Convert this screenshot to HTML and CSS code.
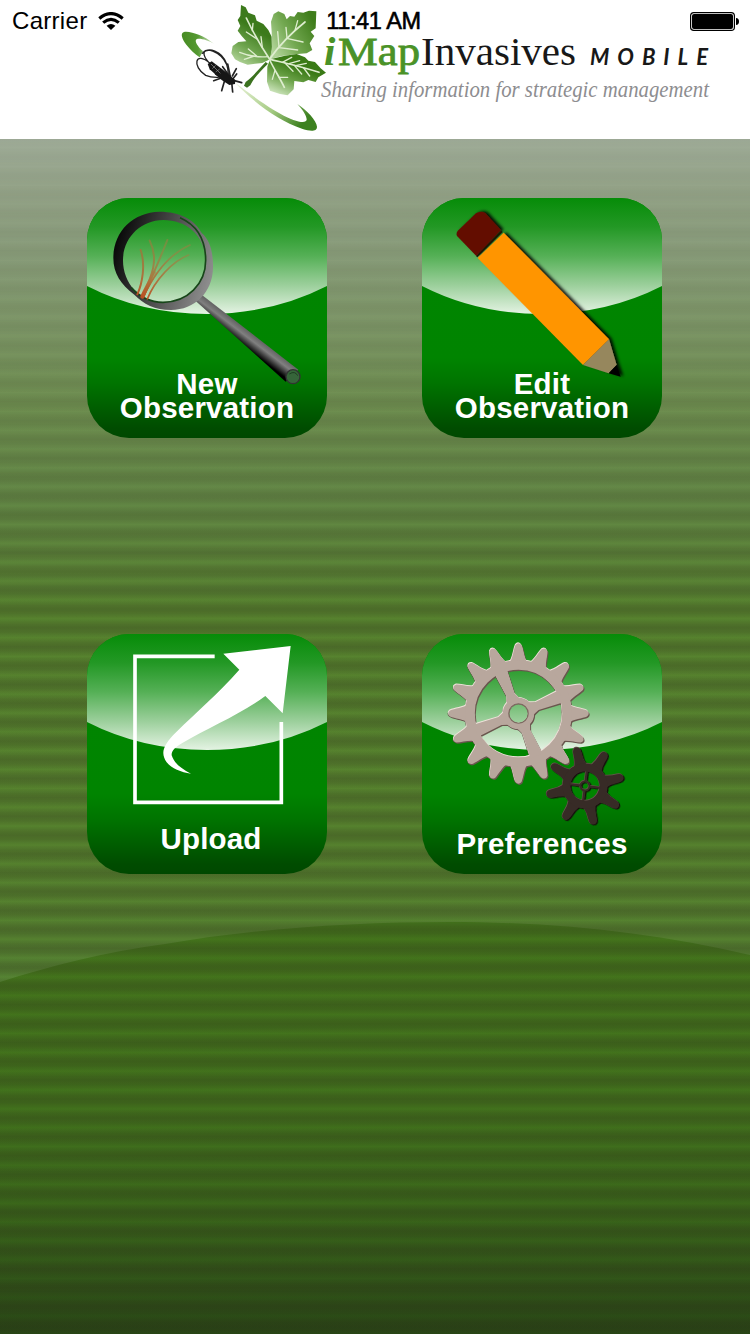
FILE: index.html
```html
<!DOCTYPE html>
<html lang="en">
<head>
<meta charset="utf-8">
<title>iMapInvasives Mobile</title>
<link rel="stylesheet" href="styles.css">
</head>
<body>
<div class="screen">
  <header class="header">
    <svg class="logo" viewBox="0 0 750 139" aria-label="iMapInvasives Mobile">
      <defs>
        <linearGradient id="leafA" x1=".6" y1="0" x2="0.2" y2="1"><stop offset="0.35" stop-color="#3c7a1b"/><stop offset=".7" stop-color="#6fa54f"/><stop offset="1" stop-color="#b4d59c"/></linearGradient>
        <linearGradient id="leafB" x1="1" y1="0.1" x2="0" y2="0.7"><stop offset="0.1" stop-color="#3f7d1b"/><stop offset=".6" stop-color="#73a851"/><stop offset="1" stop-color="#b0d398"/></linearGradient>
        <linearGradient id="leafC" x1=".8" y1="0" x2="0.2" y2="1"><stop offset="0.35" stop-color="#3a7a16"/><stop offset=".65" stop-color="#6ca349"/><stop offset="1" stop-color="#cfe6bf"/></linearGradient>
        <linearGradient id="swoosh" x1="0" y1="0" x2="1" y2="0.5"><stop offset="0" stop-color="#edf5dd"/><stop offset="0.6" stop-color="#a5cb83"/><stop offset="1" stop-color="#3d8120"/></linearGradient>
        <linearGradient id="swooshTop" x1="0" y1="0" x2="1" y2="0"><stop offset="0" stop-color="#478b22"/><stop offset="0.5" stop-color="#559932"/><stop offset="1" stop-color="#dcebcf"/></linearGradient>
      </defs>
      <g transform="translate(175 0) scale(.33333)">
        <path fill="url(#swooshTop)" d="M117 131C88 108 46 92 27 96C14 100 22 118 34 134C45 149 60 162 74 172L84 154C70 142 55 122 66 117C78 114 100 122 117 131Z"/>
        <path fill="url(#swoosh)" d="M178 246C240 293 300 338 355 360C377 368 396 369 395 358C394 345 383 330 367 312C395 330 425 362 426 380C426 396 405 394 383 387C305 360 235 306 178 246Z"/>
        <path fill="url(#leafA)" d="M285 178L262 189L240 191L218 194L195 186L180 178L169 160L173 138L190 126L214 124L200 108L188 92L196 78L188 60L196 48L198 15L212 22L220 38L240 46L245 62L265 72L280 90L290 110L291 150Z"/>
        <path fill="url(#leafB)" d="M285 178L291 140L290 95L288 65L296 42L310 34L328 42L335 58L345 48L358 50L368 36L385 38L402 32L424 34L422 85L407 95L418 108L404 130L412 150L395 160L360 163L320 168Z"/>
        <path fill="url(#leafC)" d="M285 178L330 167L365 162L390 172L400 182L420 186L437 205L453 218L430 232L422 246L400 240L385 247L358 243L356 268L338 286L315 282L285 272L276 245L277 200Z"/>
        <g fill="none" stroke="#deedcf" stroke-linecap="round">
          <path stroke-width="5" d="M283 176C262 145 232 92 214 54M284 177C312 137 350 98 390 66M286 178C335 190 385 201 432 217M284 180C300 212 315 235 328 262"/>
          <path stroke-width="4" d="M262 143L258 110M246 117L214 96M232 92L234 70M278 170C250 172 220 168 194 157M245 168L220 147M238 168L208 178M312 142L308 95M336 114L333 82M360 91L368 62M335 115L384 126M312 143L368 150M322 187L350 172M342 191L374 182M362 197L394 190M330 189L354 214M358 196L380 222M386 204L404 228M300 211L292 238M312 232L338 232"/>
        </g>
        <path fill="#3b721f" d="M272 186L279 191C255 214 235 236 226 256L216 263L207 257L212 246C232 232 252 206 272 186Z"/>
        <g fill="none" stroke="#222" stroke-width="4" stroke-linecap="round">
          <path d="M105 190C60 150 50 200 92 226Q108 233 130 232M100 186C66 145 105 140 138 169C154 184 160 202 160 224M82 160C100 140 140 152 154 190"/>
          <path stroke-width="5" d="M145 232L116 242M150 238L140 272M163 228L143 200M166 230L158 192M172 228L184 206M178 242L200 248M170 246L173 276M174 236L185 222M152 240L122 222"/>
        </g>
        <path fill="#161616" d="M98 192L110 184L142 208L162 224L181 240L180 252L163 255L140 240L104 208Z"/>
        <path fill="none" stroke="#999" stroke-width="2" d="M108 192L136 220M122 196L112 206M134 207L122 216"/>
      </g>
      <text class="brand"><tspan class="brand-i" x="324" y="65">i</tspan><tspan class="brand-map" x="338" y="65" textLength="82" lengthAdjust="spacingAndGlyphs">Map</tspan><tspan x="421" y="65" textLength="155" lengthAdjust="spacingAndGlyphs">Invasives</tspan></text>
      <text class="mobile" x="590" y="65" textLength="118">MOBILE</text>
      <text class="tagline" x="321" y="97" textLength="388" lengthAdjust="spacingAndGlyphs">Sharing information for strategic management</text>
    </svg>
    <div class="status">
      <div class="status-left">
        <span>Carrier</span>
        <svg class="wifi" viewBox="0 0 26 18"><g fill="none" stroke="#000" stroke-width="3.2"><path d="M1.3 6.4Q13 -3.2 24.7 6.4"/><path d="M5.2 10.6Q13 4 20.8 10.6"/></g><path d="M8.6 13.8Q13 10 17.4 13.8L13 18Z"/></svg>
      </div>
      <span class="clock">11:41 AM</span>
      <svg class="battery" viewBox="0 0 49 19"><rect x=".6" y=".6" width="43.8" height="17.8" rx="3.2" fill="#fff" stroke="#000" stroke-width="1.2"/><rect x="2" y="2" width="41" height="15" rx="2"/><path d="M46 6Q49 6.3 49 9.5Q49 12.7 46 13Z"/></svg>
    </div>
  </header>

  <main class="home">
    <svg class="hill" viewBox="0 0 750 412" preserveAspectRatio="none">
      <defs><linearGradient id="hillFill" x1="0" y1="0" x2="0" y2="1"><stop offset="0" stop-color="#44751c"/><stop offset=".45" stop-color="#42721d"/><stop offset=".68" stop-color="#3b681b"/><stop offset=".85" stop-color="#325719"/><stop offset="1" stop-color="#294716"/></linearGradient></defs>
      <path fill="url(#hillFill)" d="M0 60C50 44 105 30 165 22C250 7 350 0 450 0C560 0 655 11 750 33V412H0Z"/>
    </svg>

    <nav class="tiles">
      <a class="tile">
        <svg class="art" viewBox="0 0 240 240">
          <defs>
            <linearGradient id="gloss" x1="0" y1="0" x2="0" y2="1"><stop offset="0" stop-color="#068c08"/><stop offset=".25" stop-color="#239825"/><stop offset=".5" stop-color="#55b056"/><stop offset=".75" stop-color="#9bcf9b"/><stop offset="1" stop-color="#e4f3e3"/></linearGradient>
            <linearGradient id="rim" x1="0" y1=".3" x2="1" y2=".6"><stop offset="0" stop-color="#050505"/><stop offset=".5" stop-color="#4a4a4a"/><stop offset="1" stop-color="#8d8d8d"/></linearGradient>
            <linearGradient id="rod" gradientUnits="userSpaceOnUse" x1="478" y1="458" x2="504" y2="424"><stop offset="0" stop-color="#000"/><stop offset=".65" stop-color="#808080"/><stop offset="1" stop-color="#666"/></linearGradient>
            <linearGradient id="weed" x1="0" y1="1" x2=".6" y2="0"><stop offset="0" stop-color="#b95224"/><stop offset="1" stop-color="#a77b3f" stop-opacity=".5"/></linearGradient>
          </defs>
          <path id="shine" fill="url(#gloss)" d="M0 0H240V88Q185 116 120 116Q55 116 0 88Z"/>
          <g transform="scale(.33333) translate(-21 -24)">
            <path fill="url(#rod)" d="M343 329L366 315L655 539L617 575Z"/>
            <ellipse cx="639" cy="560" rx="21" ry="21" fill="#36653a" stroke="#333" stroke-width="4"/>
            <path fill="none" stroke="#1c3f20" stroke-width="3" d="M628 552Q645 541 653 557"/>
            <path fill="url(#rim)" fill-rule="evenodd" d="M239 65C300 65 345 90 365 129C391 151 400 190 399 235C397 307 345 360 273 360C225 360 190 342 163 314C122 282 100 250 100 203C101 125 157 67 239 65ZM250 90C180 91 129 145 129 211C129 280 180 337 249 337C323 337 378 280 377 209C374 140 323 90 250 90Z"/>
            <path fill="none" stroke="#174619" stroke-width="5" d="M300 83C350 105 377 150 377 211C377 282 322 337 249 337C208 337 177 319 154 293"/>
            <g fill="none" stroke="url(#weed)" stroke-linecap="round"><path stroke-width="6" d="M172 313C187 280 197 224 182 180M185 321C217 257 237 208 209 152M190 321C220 250 247 190 262 150"/><path stroke-width="5" d="M190 322C232 230 280 187 330 165M202 327C225 270 278 213 326 195"/><path stroke-width="12" d="M187 320Q200 290 224 250"/></g>
          </g>
        </svg>
        <span class="label">New<br>Observation</span>
      </a>

      <a class="tile">
        <svg class="art" viewBox="0 0 240 240">
          <defs><filter id="shade" x="-10%" y="-10%" width="125%" height="125%"><feDropShadow dx="8" dy="-2" stdDeviation="5" flood-color="#000" flood-opacity=".9"/></filter></defs>
          <use href="#shine"/>
          <g transform="scale(.33333) translate(-21 -24)">
            <g filter="url(#shade)">
              <path fill="#631000" d="M126 138Q122 129 130 121L183 70Q197 61 211 69L258 120L184 198Z"/>
              <path fill="#ff9500" d="M188 204L266 128L582 448L504 525Z"/>
              <path fill="#96875d" d="M504 525L582 448L605 525L581 550Z"/>
              <path fill="#000" d="M581 550L605 525L617 560Z"/>
            </g>
            <path stroke="#201500" stroke-width="5" d="M185 200L261 124"/>
          </g>
        </svg>
        <span class="label">Edit<br>Observation</span>
      </a>

      <a class="tile">
        <svg class="art" viewBox="0 0 240 240">
          <use href="#shine"/>
          <g transform="scale(.33333) translate(-21 -27)">
            <path fill="none" stroke="#fff" stroke-width="11" d="M404 94H165V532H604V291"/>
            <path fill="#fff" d="M632 63L430 86L478 134C415 206 350 260 289 321C250 359 240 384 260 412C275 431 303 442 333 446C302 430 282 414 275 391C274 377 285 367 307 354C386 307 480 269 556 213L608 265Z"/>
          </g>
        </svg>
        <span class="label label-upload">Upload</span>
      </a>

      <a class="tile">
        <svg class="art" viewBox="0 0 240 240">
          <defs>
            <filter id="soft" x="-10%" y="-10%" width="120%" height="120%"><feGaussianBlur stdDeviation=".6"/></filter>
            <path id="tooth" d="M-9.5 -50C-5.5 -55 -5 -64 -3 -68.5Q0 -72 3 -68.5C5 -64 5.5 -55 9.5 -50Z"/>
            <g id="teeth4"><use href="#tooth"/><use href="#tooth" transform="rotate(22.5)"/><use href="#tooth" transform="rotate(45)"/><use href="#tooth" transform="rotate(67.5)"/></g>
            <path id="spoke" d="M-7 -13L-4.2 -20L-6.5 -46H6.5L4.2 -20L7 -13Z"/>
            <g id="bigGear">
              <use href="#teeth4"/><use href="#teeth4" transform="rotate(90)"/><use href="#teeth4" transform="rotate(180)"/><use href="#teeth4" transform="rotate(270)"/>
              <circle r="48.5" fill="none" stroke="currentColor" stroke-width="9.5"/>
              <circle r="12.7" fill="none" stroke="currentColor" stroke-width="6"/>
              <use href="#spoke" transform="rotate(-23)"/><use href="#spoke" transform="rotate(68)"/><use href="#spoke" transform="rotate(157)"/><use href="#spoke" transform="rotate(248)"/>
            </g>
            <path id="peg" d="M-6.5 -20Q-4 -26 -4.2 -34Q-4 -39.5 0 -39.5Q4 -39.5 4.2 -34Q4 -26 6.5 -20Z"/>
            <g id="pegs2"><use href="#peg"/><use href="#peg" transform="rotate(45)"/></g>
            <g id="smallGear">
              <use href="#pegs2"/><use href="#pegs2" transform="rotate(90)"/><use href="#pegs2" transform="rotate(180)"/><use href="#pegs2" transform="rotate(270)"/>
              <circle r="18.5" fill="none" stroke="currentColor" stroke-width="8"/>
              <circle r="4.5" fill="none" stroke="currentColor" stroke-width="2"/>
              <path stroke="currentColor" stroke-width="2.2" d="M0 -4V-16M0 4V16M-4 0H-16M4 0H16" transform="rotate(20)"/>
            </g>
            <mask id="hubHole" maskUnits="userSpaceOnUse" x="-80" y="-80" width="160" height="160"><rect x="-80" y="-80" width="160" height="160" fill="#fff"/><circle r="9" fill="#000"/></mask>
          </defs>
          <use href="#shine"/>
          <g transform="translate(96.5 79.5)" mask="url(#hubHole)">
            <use class="gear-dark" href="#bigGear" x="1" y="1.2" filter="url(#soft)"/>
            <use class="gear-dark" href="#bigGear" x="-.7" y=".3" filter="url(#soft)"/>
            <use class="gear-light" href="#bigGear" x="-.5" y="-.9"/>
            <use class="gear-face" href="#bigGear"/>
            <circle class="hub-edge" r="9.6"/>
          </g>
          <g transform="translate(163 152)">
            <use class="peg-dark" href="#smallGear" x="1" y="1" transform="rotate(-13)" filter="url(#soft)"/>
            <use class="peg-light" href="#smallGear" x="-.4" y="-.8" transform="rotate(-13)"/>
            <use class="peg-face" href="#smallGear" transform="rotate(-13)"/>
          </g>
        </svg>
        <span class="label">Preferences</span>
      </a>
    </nav>
  </main>
</div>
</body>
</html>
```
FILE: styles.css
```css
* { box-sizing: border-box; }

body { margin: 0; }

.screen {
  width: 750px;
  height: 1334px;
  display: flex;
  flex-direction: column;
  overflow: hidden;
  font-family: "Liberation Sans", Arial, sans-serif;
}

.header {
  position: relative;
  flex: none;
  height: 139px;
  background: #fff;
}

.logo {
  display: block;
  width: 750px;
  height: 139px;
}

.brand,
.tagline { font-family: "Liberation Serif", serif; }

.brand { font-size: 41px; fill: #181818; }
.brand-i { font-style: italic; font-weight: bold; fill: #4a9227; }
.brand-map { fill: #4a9227; stroke: #4a9227; stroke-width: .8px; }
.tagline { font-size: 24px; font-style: italic; fill: #8d8d90; }

.mobile {
  font-family: Lato, sans-serif;
  font-size: 22px;
  font-style: italic;
  font-weight: bold;
  fill: #181818;
}

/* The status bar lies over the logo */
.status {
  position: absolute;
  inset: 0 0 auto;
  height: 40px;
  padding: 0 11px 0 12px;
  display: grid;
  grid-template-columns: 1fr auto 1fr;
  align-items: center;
  font-size: 24px;
  line-height: 42px;
  color: #000;
}

.status-left {
  display: flex;
  align-items: center;
  gap: 11px;
  letter-spacing: .3px;
}

.wifi { width: 26px; height: 18px; }

.clock {
  font-size: 23.5px;
  letter-spacing: -.4px;
  margin-right: 4px;
  -webkit-text-stroke: .6px #000;
}

.battery {
  width: 49px;
  height: 19px;
  justify-self: end;
}

.home {
  position: relative;
  flex: 1;
  padding: 59px 88px 0 87px;
  background: linear-gradient(#9fac98 0, #94a388 50px, #8a9d7c 105px, #7e9769 180px, #6e8e50 265px, #638846 360px, #57832f 470px, #56822e 700px, #558130 800px, #568435 850px);
}

/* Horizontal ribbing across the whole backdrop */
.home::after {
  content: "";
  position: absolute;
  inset: 0;
  background: repeating-linear-gradient(rgba(42, 38, 24, .24) 0, rgba(42, 38, 24, .19) 3px, rgba(42, 38, 24, 0) 8.5px, rgba(42, 38, 24, .19) 14px, rgba(42, 38, 24, .26) 17.5px, rgba(42, 38, 24, .24) 18.85px);
  -webkit-mask-image: linear-gradient(rgba(0, 0, 0, .1), rgba(0, 0, 0, .35) 230px, #000 480px);
  mask-image: linear-gradient(rgba(0, 0, 0, .1), rgba(0, 0, 0, .35) 230px, #000 480px);
}

.hill {
  position: absolute;
  left: 0;
  bottom: 0;
  width: 750px;
  height: 412px;
}

.tiles {
  position: relative;
  z-index: 1;
  display: grid;
  grid-template-columns: 240px 240px;
  grid-auto-rows: 240px;
  gap: 196px 95px;
}

.tile {
  position: relative;
  display: flex;
  flex-direction: column;
  justify-content: flex-end;
  overflow: hidden;
  border-radius: 42px;
  background: linear-gradient(#008600 0, #008400 160px, #007400 185px, #004c00 230px, #004800 240px);
}

.art {
  position: absolute;
  inset: 0;
  width: 240px;
  height: 240px;
}

.label {
  position: relative;
  padding-bottom: 18px;
  text-align: center;
  font-size: 29.5px;
  font-weight: bold;
  line-height: 24px;
  letter-spacing: .2px;
  color: #fff;
}

.label-upload { padding: 0 0 23px 8px; }

.gear-dark { color: #69564e; fill: #69564e; }
.gear-light { color: #eee2da; fill: #eee2da; }
.gear-face { color: #b8a79d; fill: #b8a79d; }
.hub-edge { fill: none; stroke: #7d6a61; stroke-width: 1.4px; }
.peg-dark { color: #15100e; fill: #15100e; }
.peg-light { color: #66554c; fill: #66554c; }
.peg-face { color: #372b26; fill: #372b26; }
```
